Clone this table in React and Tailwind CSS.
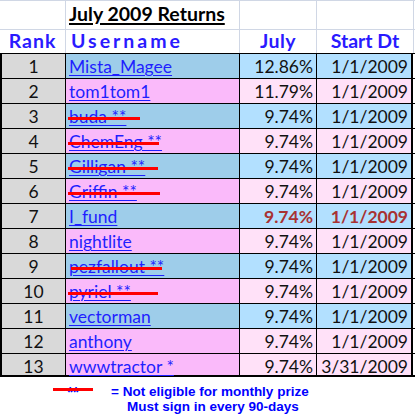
const rows = [
  { rank: 1, name: 'Mista_Magee', pct: '12.86%', dt: '1/1/2009', blue: true },
  { rank: 2, name: 'tom1tom1', pct: '11.79%', dt: '1/1/2009', blue: false },
  { rank: 3, name: 'buda **', pct: '9.74%', dt: '1/1/2009', blue: true, strike: 'left-[2px] w-[72px]' },
  { rank: 4, name: 'ChemEng **', pct: '9.74%', dt: '1/1/2009', blue: false, strike: 'left-[2px] w-[91px]' },
  { rank: 5, name: 'Gilligan **', pct: '9.74%', dt: '1/1/2009', blue: true, strike: 'left-[2px] w-[90px]' },
  { rank: 6, name: 'Griffin **', pct: '9.74%', dt: '1/1/2009', blue: false, strike: 'left-[2px] w-[92px]' },
  { rank: 7, name: 'I_fund', pct: '9.74%', dt: '1/1/2009', blue: true, hot: true },
  { rank: 8, name: 'nightlite', pct: '9.74%', dt: '1/1/2009', blue: false },
  { rank: 9, name: 'pezfallout **', pct: '9.74%', dt: '1/1/2009', blue: true, strike: 'left-[5px] w-[91px]' },
  { rank: 10, name: 'pyriel **', pct: '9.74%', dt: '1/1/2009', blue: false, strike: 'left-[2px] w-[90px]' },
  { rank: 11, name: 'vectorman', pct: '9.74%', dt: '1/1/2009', blue: true },
  { rank: 12, name: 'anthony', pct: '9.74%', dt: '1/1/2009', blue: false },
  { rank: 13, name: 'wwwtractor *', pct: '9.74%', dt: '3/31/2009', blue: false },
];

const Row = ({ row, last }) => {
  const nameBg = row.blue ? 'bg-[#9ecdea]' : 'bg-[#fabafa]';
  const numBg = row.blue ? 'bg-[#b2e0ff]' : 'bg-[#ffe1f8]';
  const numText = row.hot ? 'font-bold text-[#a83232]' : 'text-[#111]';
  return (
    <div className={`flex border-t border-black ${last ? 'h-[24px] border-b-2' : 'h-[25px]'}`}>
      <div className="w-[66px] shrink-0 border-l-2 border-r border-black bg-[#d9d9d9] text-center leading-[25px] text-[#111]">
        {row.rank}
      </div>
      <div className={`relative w-[174px] shrink-0 border-r border-black pl-[3px] leading-[25px] ${nameBg}`}>
        <span className="text-[#1f1fff] underline decoration-1 underline-offset-[2px]">{row.name}</span>
        {row.strike && <div className={`absolute top-[13px] h-[3px] bg-[#ff0000] ${row.strike}`} />}
      </div>
      <div className={`w-[77px] shrink-0 border-r border-black pr-[3px] text-right leading-[25px] ${numBg} ${numText}`}>
        {row.pct}
      </div>
      <div className={`w-[96px] shrink-0 border-r-2 border-black pr-[3px] text-right leading-[25px] ${numBg} ${numText}`}>
        {row.dt}
      </div>
    </div>
  );
};

export default function App() {
  return (
    <div className="h-[416px] w-[415px] overflow-hidden bg-white font-['Lato',sans-serif] text-[17.5px]">
      {/* title row */}
      <div className="flex h-[30px] border-y border-[#d0d7e5]">
        <div className="w-[66px] shrink-0 border-r border-[#d0d7e5]" />
        <div className="w-[174px] shrink-0 border-r border-[#d0d7e5] pl-[3px] pt-[1px] text-[19.5px] font-bold leading-[24px] text-black">
          <span className="underline decoration-2 underline-offset-[2px]">July 2009 Returns</span>
        </div>
        <div className="w-[77px] shrink-0 border-r border-[#d0d7e5]" />
        <div className="w-[97px] shrink-0 border-r border-[#d0d7e5]" />
      </div>

      {/* column headers */}
      <div className="flex h-[23px] text-[19.5px] font-bold leading-[22px] text-[#2a1aff]">
        <div className="w-[66px] shrink-0 border-r border-[#d0d7e5] text-center tracking-[1px]">Rank</div>
        <div className="w-[174px] shrink-0 border-r border-[#d0d7e5] pl-[5px] tracking-[3px]">Username</div>
        <div className="w-[77px] shrink-0 border-r border-[#d0d7e5] text-center tracking-[0.5px]">July</div>
        <div className="w-[97px] shrink-0 border-r border-[#d0d7e5] text-center">Start Dt</div>
      </div>

      {/* data */}
      <div className="w-[415px]">
        {rows.map((row, i) => (
          <Row key={row.rank} row={row} last={i === rows.length - 1} />
        ))}
      </div>

      {/* footnote */}
      <div className="font-['Liberation_Sans',Arial,sans-serif] text-[13.5px] font-bold leading-[15px] text-[#0000ff]">
        <div className="flex pt-[7px]">
          <div className="relative ml-[53px] w-[40px] text-center text-[15px]">
            **
            <div className="absolute left-0 top-[4px] h-[3px] w-[40px] bg-[#ff0000]" />
          </div>
          <div className="ml-[18px]">= Not eligible for monthly prize</div>
        </div>
        <div className="pl-[127px]">Must sign in every 90-days</div>
      </div>
    </div>
  );
}
